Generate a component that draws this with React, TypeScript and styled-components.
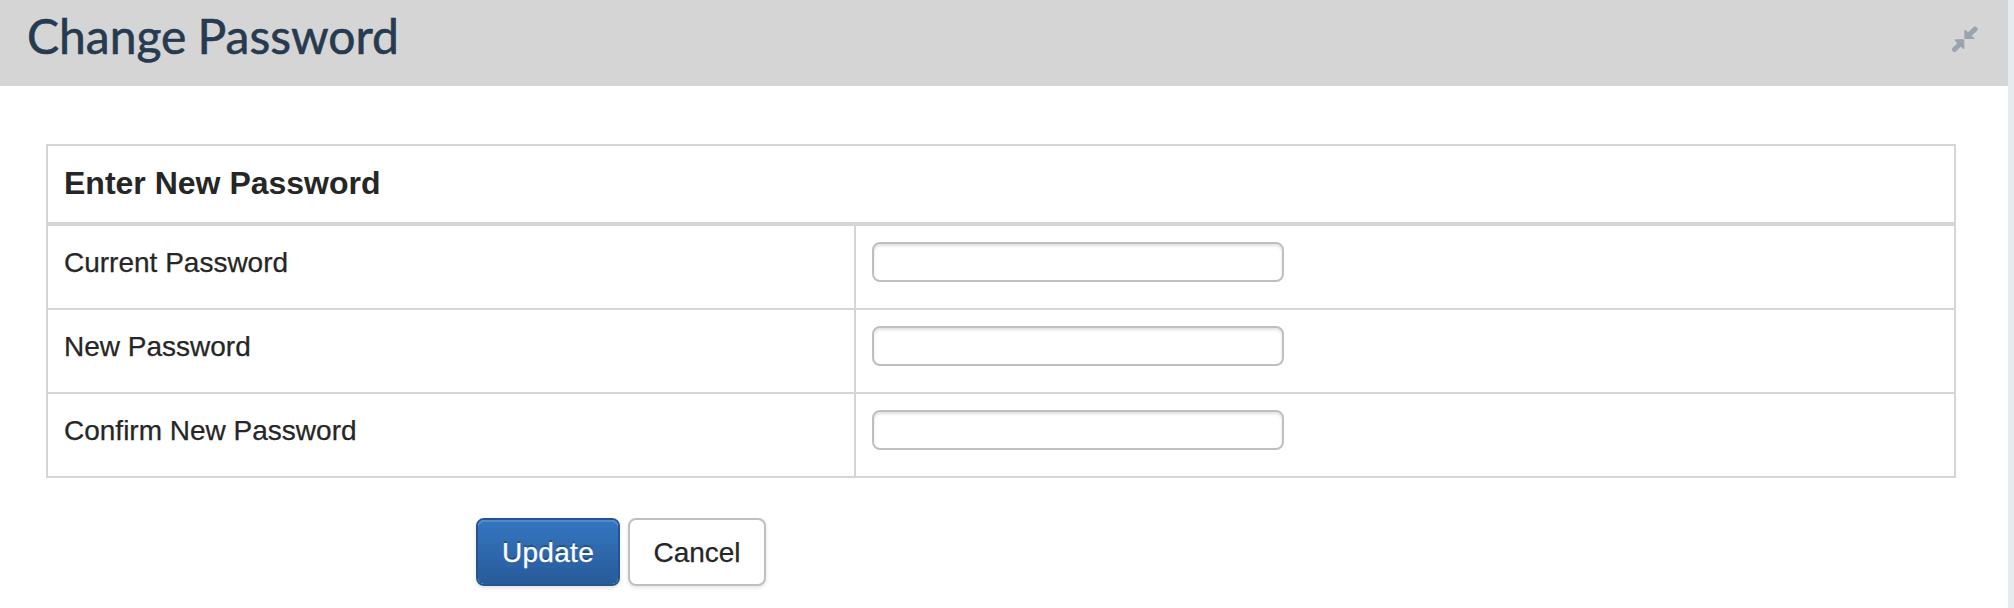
import React from "react";
import styled, { createGlobalStyle, css } from "styled-components";

const GlobalStyle = createGlobalStyle`
  * { box-sizing: border-box; }
  body {
    margin: 0;
    background: #fff;
    color: #262626;
    font-family: "Liberation Sans", Arial, sans-serif;
    font-size: 28px;
    line-height: 40px;
  }
`;

const Page = styled.div`
  min-height: 608px;
  border-right: 6px solid #e6ebef;
`;

const Header = styled.header`
  display: flex;
  align-items: flex-start;
  justify-content: space-between;
  height: 86px;
  padding: 7px 30px 0 27px;
  background: #d5d5d5;
`;

const Title = styled.h1`
  margin: 0;
  color: #263a50;
  font: 400 48px/58px Lato, sans-serif;
  word-spacing: -1.2px;
  -webkit-text-stroke: 0.6px #263a50;
`;

const CollapseButton = styled.button`
  display: flex;
  margin: 19px 0 0;
  padding: 0;
  border: 0;
  background: none;
`;

const Form = styled.form`
  padding: 58px 52px 0 46px;
`;

const Panel = styled.section`
  border: 2px solid #d5d5d5;
`;

const PanelTitle = styled.h2`
  height: 80px;
  margin: 0;
  padding: 16px;
  border-bottom: 4px solid #d5d5d5;
  font-size: 32px;
  line-height: 42px;
`;

const Row = styled.div`
  display: grid;
  grid-template-columns: 808px 1fr;
  height: 82px;

  & + & {
    height: 84px;
    border-top: 2px solid #d5d5d5;
  }
`;

const Label = styled.label`
  padding: 17px 16px 0;
  border-right: 2px solid #d5d5d5;
  -webkit-text-stroke: 0.25px currentColor;
`;

const Field = styled.div`
  padding: 16px;
`;

const Input = styled.input`
  display: block;
  width: 412px;
  height: 40px;
  padding: 0 10px;
  border: 2px solid #bfbfbf;
  border-radius: 8px;
  background: #fff;
  box-shadow: inset 0 2px 3px rgba(0, 0, 0, 0.12);
  font: inherit;
  outline: none;
`;

const Actions = styled.div`
  display: flex;
  gap: 8px;
  padding: 40px 0 0 430px;
`;

const Button = styled.button<{ $primary?: boolean }>`
  width: 138px;
  height: 68px;
  padding: 1px 0 0;
  border: 2px solid #bfbfbf;
  border-radius: 8px;
  background: #fff;
  box-shadow: 0 2px 4px rgba(0, 0, 0, 0.1);
  color: #262626;
  font: 28px/40px "Liberation Sans", Arial, sans-serif;
  -webkit-text-stroke: 0.25px currentColor;

  ${({ $primary }) =>
    $primary &&
    css`
      width: 144px;
      border-color: #24548f;
      background: linear-gradient(#3576c1, #275b99) padding-box;
      box-shadow: inset 0 2px 0 rgba(255, 255, 255, 0.14), 0 2px 4px rgba(0, 0, 0, 0.12);
      color: #fff;
      letter-spacing: 0.3px;
      text-shadow: 0 -2px 0 rgba(0, 0, 0, 0.25);
    `}
`;

const fields = [
  { id: "current", label: "Current Password" },
  { id: "new", label: "New Password" },
  { id: "confirm", label: "Confirm New Password" },
];

function CollapseIcon() {
  return (
    <svg width="26" height="26" viewBox="0 0 26 26" fill="#9ba4ae" stroke="#9ba4ae" strokeLinejoin="round" aria-hidden="true">
      <path d="M13.1 12.3V4.7l2.5 2.2 3.6 3.5 2.4 1.9z" strokeWidth="1.6" />
      <path d="M16 9.8l7.1-6.7" strokeWidth="5" strokeLinecap="round" />
      <path d="M11.5 14.1v8.2l-2.2-2.2-3.6-3.6-2.1-2.4z" strokeWidth="1.6" />
      <path d="M9.4 16.6l-6.9 6.9" strokeWidth="5" strokeLinecap="round" />
    </svg>
  );
}

export default function App() {
  return (
    <>
      <GlobalStyle />
      <Page>
        <Header>
          <Title>Change Password</Title>
          <CollapseButton type="button" aria-label="Collapse">
            <CollapseIcon />
          </CollapseButton>
        </Header>
        <Form onSubmit={(event) => event.preventDefault()}>
          <Panel>
            <PanelTitle>Enter New Password</PanelTitle>
            {fields.map(({ id, label }) => (
              <Row key={id}>
                <Label htmlFor={id}>{label}</Label>
                <Field>
                  <Input id={id} type="password" />
                </Field>
              </Row>
            ))}
          </Panel>
          <Actions>
            <Button $primary type="submit">Update</Button>
            <Button type="button">Cancel</Button>
          </Actions>
        </Form>
      </Page>
    </>
  );
}
